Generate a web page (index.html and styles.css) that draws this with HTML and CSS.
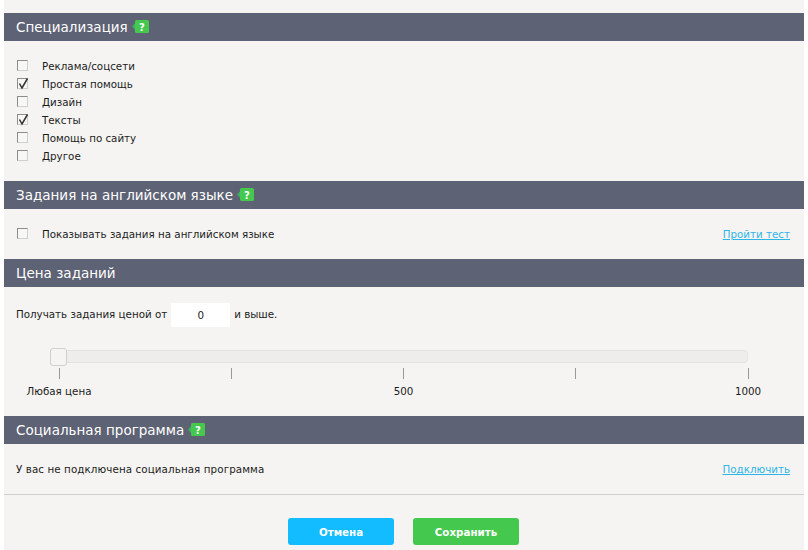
FILE: index.html
```html
<!DOCTYPE html>
<html lang="ru">
<head>
<meta charset="utf-8">
<title>Настройки</title>
<link rel="stylesheet" href="styles.css">
</head>
<body>
<div class="panel">
  <section class="sec sec-spec">
    <h2 class="bar">Специализация
      <svg class="help" width="17" height="14" viewBox="0 0 17 14"><path d="M0 6.5 4.5 1.5V11.5Z" fill="#3fae62"/><rect x="3" y="0" width="14" height="13" rx="1.5" fill="#45c84e"/><text x="10" y="10.5" class="q">?</text></svg>
    </h2>
    <ul class="checks">
      <li class="check"><span class="box"></span>Реклама/соцсети</li>
      <li class="check"><span class="box on"><svg width="13" height="13" viewBox="0 0 13 13"><path d="M2.5 5.5 5 10 10.5 0.5" fill="none" stroke="#333" stroke-width="1.5"/></svg></span>Простая помощь</li>
      <li class="check"><span class="box"></span>Дизайн</li>
      <li class="check"><span class="box on"><svg width="13" height="13" viewBox="0 0 13 13"><path d="M2.5 5.5 5 10 10.5 0.5" fill="none" stroke="#333" stroke-width="1.5"/></svg></span>Тексты</li>
      <li class="check"><span class="box"></span>Помощь по сайту</li>
      <li class="check"><span class="box"></span>Другое</li>
    </ul>
  </section>

  <section class="sec">
    <h2 class="bar">Задания на английском языке
      <svg class="help" width="17" height="14" viewBox="0 0 17 14"><path d="M0 6.5 4.5 1.5V11.5Z" fill="#3fae62"/><rect x="3" y="0" width="14" height="13" rx="1.5" fill="#45c84e"/><text x="10" y="10.5" class="q">?</text></svg>
    </h2>
    <div class="row row-en">
      <div class="check"><span class="box"></span>Показывать задания на английском языке</div>
      <a class="link" href="#">Пройти тест</a>
    </div>
  </section>

  <section class="sec">
    <h2 class="bar">Цена заданий</h2>
    <div class="price">
      <span>Получать задания ценой от</span>
      <input class="amount" value="0" aria-label="Цена">
      <span>и выше.</span>
    </div>
    <div class="slider">
      <div class="track"><span class="thumb"></span></div>
      <div class="scale">
        <div class="tick"><i></i><span>Любая цена</span></div>
        <div class="tick"><i></i></div>
        <div class="tick"><i></i><span>500</span></div>
        <div class="tick"><i></i></div>
        <div class="tick"><i></i><span>1000</span></div>
      </div>
    </div>
  </section>

  <section class="sec">
    <h2 class="bar">Социальная программа
      <svg class="help" width="17" height="14" viewBox="0 0 17 14"><path d="M0 6.5 4.5 1.5V11.5Z" fill="#3fae62"/><rect x="3" y="0" width="14" height="13" rx="1.5" fill="#45c84e"/><text x="10" y="10.5" class="q">?</text></svg>
    </h2>
    <div class="row row-soc">
      <span class="soc-text">У вас не подключена социальная программа</span>
      <a class="link" href="#">Подключить</a>
    </div>
  </section>

  <footer class="actions">
    <button class="btn cancel">Отмена</button>
    <button class="btn save">Сохранить</button>
  </footer>
</div>
</body>
</html>
```

FILE: styles.css
```css
html, body {
  margin: 0;
  padding: 0;
  background: #fff;
  height: 100%;
  overflow: hidden;
}
body {
  font-family: "DejaVu Sans", Verdana, sans-serif;
  font-size: 10.3px;
  color: #1c1c1c;
}
.panel {
  width: 800px;
  height: 550px;
  margin-left: 4px;
  background: #f5f4f2;
  padding-top: 13px;
  box-sizing: border-box;
}
.bar {
  margin: 0;
  height: 28px;
  background: #5d6274;
  color: #fff;
  font-weight: normal;
  font-size: 13.5px;
  line-height: 28px;
  padding-left: 12px;
  display: flex;
  align-items: center;
  gap: 4px;
}
.help { display: block; margin-top: -1px; }
.q {
  font-family: "DejaVu Sans", sans-serif;
  font-size: 10px;
  font-weight: bold;
  fill: #fff;
  text-anchor: middle;
}
.checks {
  list-style: none;
  margin: 0;
  padding: 16px 0 16px 13px;
}
.check {
  display: flex;
  align-items: center;
  height: 18px;
}
.box {
  width: 9px;
  height: 9px;
  border: 1px solid #8c8c8a;
  border-right-color: #cfcfcd;
  border-bottom-color: #cfcfcd;
  background: #f7f7f5;
  margin-right: 14px;
  margin-top: -2px;
  position: relative;
  flex: none;
}
.box svg { position: absolute; left: -1px; top: -1px; }
.row {
  display: flex;
  justify-content: space-between;
  align-items: center;
  padding: 0 14px 0 13px;
}
.row-en { height: 50px; }
.row-soc {
  height: 50px;
  padding-left: 12px;
  border-bottom: 1px solid #cfcfcd;
}
.soc-text { letter-spacing: 0.1px; }
.link {
  color: #2fb4e8;
  text-decoration: underline;
}
.price {
  display: flex;
  align-items: flex-start;
  gap: 4px;
  padding: 16px 0 0 12px;
  line-height: 23px;
}
.amount {
  width: 59px;
  height: 24px;
  box-sizing: border-box;
  border: 0;
  background: #fff;
  text-align: center;
  font: 10.3px "DejaVu Sans", sans-serif;
  color: #1c1c1c;
  padding: 0 0 1px;
}
.slider {
  padding: 23px 0 18px 46px;
  width: 698px;
}
.track {
  height: 11px;
  background: #eeedeb;
  border: 1px solid #e4e3e1;
  border-radius: 4px;
  position: relative;
}
.thumb {
  position: absolute;
  left: -1px;
  top: -3px;
  width: 15px;
  height: 16px;
  background: #f5f4f2;
  border: 1px solid #cfcfcf;
  border-radius: 3px;
}
.scale {
  display: flex;
  justify-content: space-between;
  padding: 5px 0 0 9px;
}
.tick {
  width: 0;
  height: 30px;
  display: flex;
  flex-direction: column;
  align-items: center;
  white-space: nowrap;
}
.tick i {
  display: block;
  width: 1px;
  height: 11px;
  background: #999;
  flex: none;
}
.tick span { margin-top: 6px; }
.actions {
  display: flex;
  justify-content: center;
  gap: 19px;
  padding: 23px 1px 0 0;
}
.btn {
  width: 106px;
  height: 27px;
  border: 0;
  border-radius: 3px;
  color: #fff;
  font: bold 10.3px "DejaVu Sans", sans-serif;
  padding: 0;
}
.cancel { background: #12bcff; }
.save { background: #45c84e; }
```
